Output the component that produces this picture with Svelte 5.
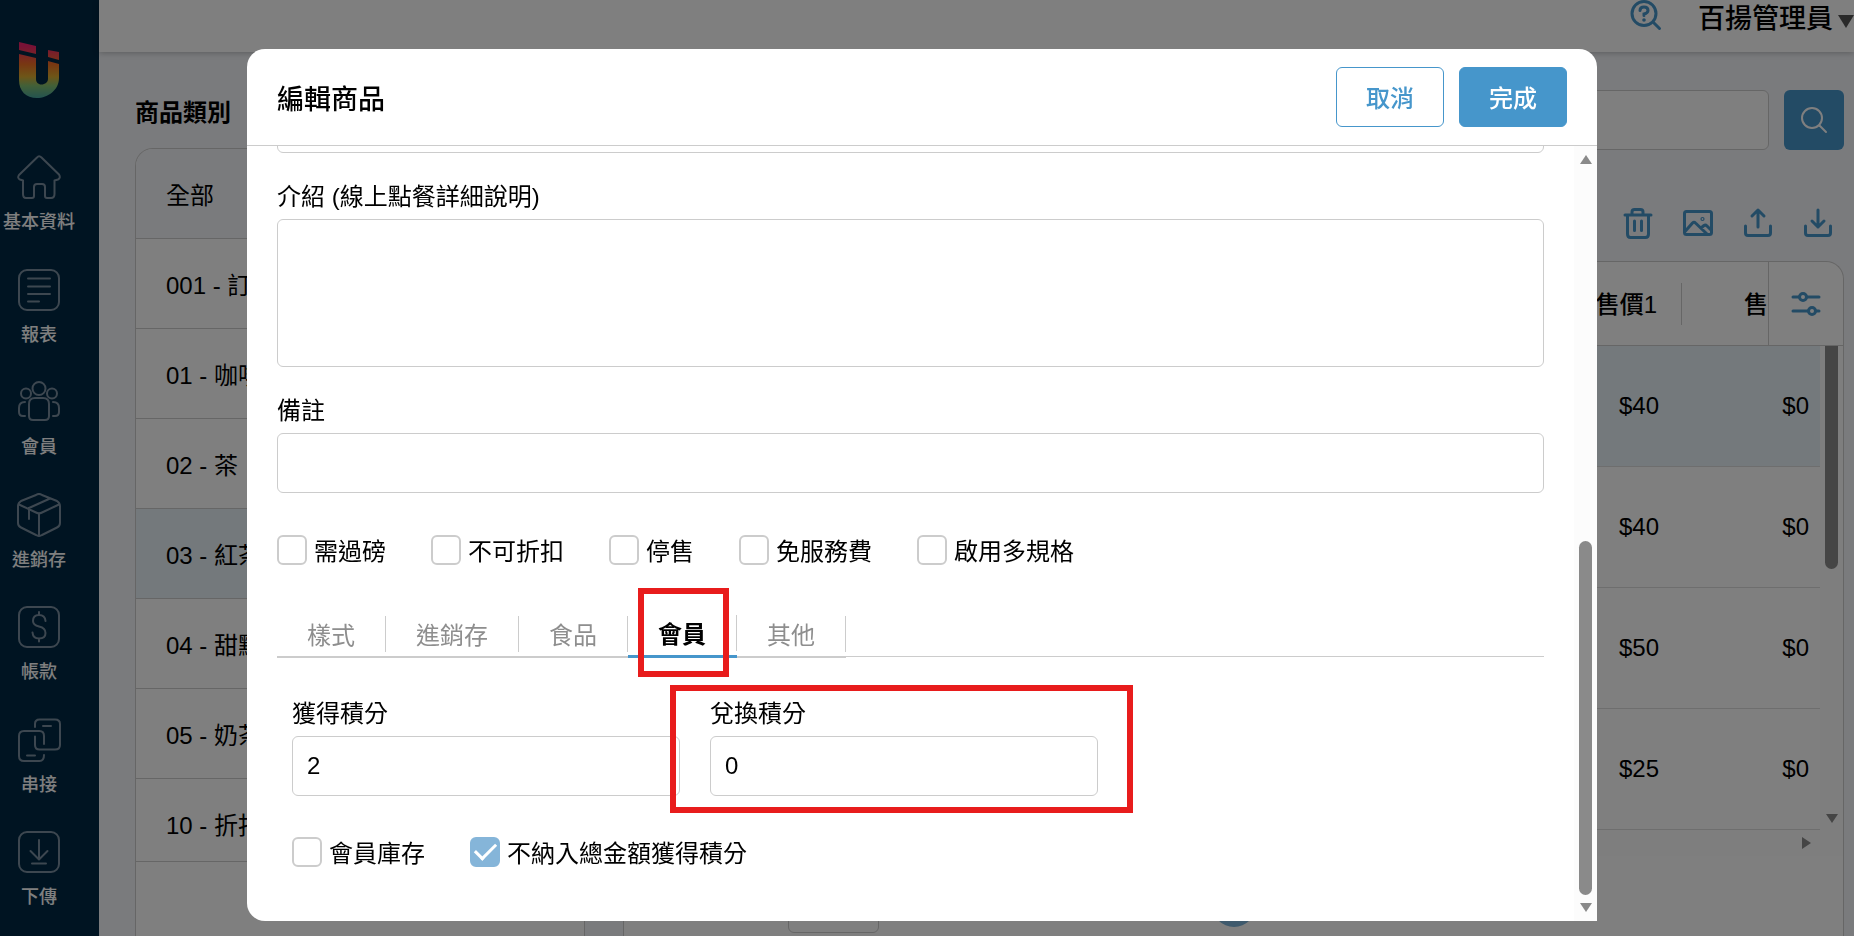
<script>
	const menus = [
		{ icon: 'home', label: '基本資料' },
		{ icon: 'report', label: '報表' },
		{ icon: 'member', label: '會員' },
		{ icon: 'stock', label: '進銷存' },
		{ icon: 'account', label: '帳款' },
		{ icon: 'link', label: '串接' },
		{ icon: 'download', label: '下傳' },
	];

	const categories = ['全部', '001 - 訂', '01 - 咖啡', '02 - 茶', '03 - 紅茶', '04 - 甜點', '05 - 奶茶', '10 - 折扣'];
	let category = $state('03 - 紅茶');

	const rows = [
		{ price1: 40, price2: 0 },
		{ price1: 40, price2: 0 },
		{ price1: 50, price2: 0 },
		{ price1: 25, price2: 0 },
	];
	let selected = $state(0);

	let flags = $state([
		{ label: '需過磅', checked: false },
		{ label: '不可折扣', checked: false },
		{ label: '停售', checked: false },
		{ label: '免服務費', checked: false },
		{ label: '啟用多規格', checked: false },
	]);

	const tabs = ['樣式', '進銷存', '食品', '會員', '其他'];
	let tab = $state('會員');

	let memberFlags = $state([
		{ label: '會員庫存', checked: false },
		{ label: '不納入總金額獲得積分', checked: true },
	]);

	let earn = $state('2');
	let redeem = $state('0');
</script>

<div class="app">
	<aside class="sidebar">
		<svg class="logo" viewBox="0 0 40 56" aria-hidden="true">
			<defs>
				<linearGradient id="rainbow" gradientUnits="userSpaceOnUse" x1="0" y1="0" x2="0" y2="56">
					<stop offset="0.08" stop-color="#f0246c" />
					<stop offset="0.4" stop-color="#f07024" />
					<stop offset="0.62" stop-color="#dcac30" />
					<stop offset="0.78" stop-color="#84c070" />
					<stop offset="1" stop-color="#48a8a0" />
				</linearGradient>
			</defs>
			<g fill="url(#rainbow)">
				<path d="M0 0 17 4V12L0 8Z" />
				<path d="M29 8 40 10V18L29 15Z" />
				<path d="M0 12 17 16V37C17 40 19 42.500 22.500 42.500S29 40 29 37V19L40 22V36C40 48 29 56 18 56C7 56 0 49 0 38Z" />
			</g>
		</svg>
		<nav>
			{#each menus as menu}
				<a href="#{menu.icon}" class="menu">
					<svg viewBox="0 0 44 44" aria-hidden="true">
						{#if menu.icon == 'home'}
							<path d="M20 2.500Q22 0 24.500 2.500L42 19.500Q44 23 41 24.500L37.500 25.500V39Q37.500 43 34 43H30Q28 43 28 41V32Q28 29 25 29H20Q17 29 17 32V41Q17 43 15 43H9Q6 43 6 39V25.500L3 24.500Q0 23 2 20Z" />
						{:else if menu.icon == 'report'}
							<rect x="2" y="2" width="40" height="40" rx="8" />
							<path d="M11 10.500H33M11 18.500H33M11 26H33M11 33.500H22" />
						{:else if menu.icon == 'member'}
							<circle cx="22" cy="8.500" r="6.500" />
							<circle cx="9" cy="13.500" r="5" />
							<circle cx="35" cy="13.500" r="5" />
							<path d="M12 24Q12 18 18 18H26Q32 18 32 24V36Q32 40 28 40H16Q12 40 12 36Z" />
							<path d="M8 22Q2 22 2 28V32Q2 36 6 36H8M36 22Q42 22 42 28V32Q42 36 38 36H36" />
						{:else if menu.icon == 'stock'}
							<path d="M19 2Q22 0 25 2L40 8Q43 10 43 13V30Q43 33 40 34.500L25 42Q22 44 19 42L4 34.500Q1 33 1 30V13Q1 10 4 8ZM2 11.500 19 19.500Q22 21 25 19.500L42 11.500M22 20.500V43M33 5.500 12 15V26" />
						{:else if menu.icon == 'account'}
							<rect x="2" y="2" width="40" height="40" rx="8" />
							<path d="M28.500 16Q28 10 22 10Q16 10 16 16Q16 20 22 21.500Q28.500 23 28.500 28Q28.500 33.500 22 33.500Q16 33.500 15.500 27.500M22 7V10M22 33.500V36.500" />
						{:else if menu.icon == 'link'}
							<path d="M18 9V6Q18 1.500 22.500 1.500H38Q43 1.500 43 6V27Q43 31.500 38 31.500H22.500Q18 31.500 18 27V18.500M26 8H34" />
							<path d="M27 26V18Q27 13 22.500 13H7Q2 13 2 18V38Q2 43 7 43H22.500Q27 43 27 37M10 37.500H18" />
						{:else}
							<rect x="2" y="2" width="40" height="40" rx="8" />
							<path d="M22 10V29M13.500 21 22 29.500 30.500 21M15 33.500H29" />
						{/if}
					</svg>
					<span>{menu.label}</span>
				</a>
			{/each}
		</nav>
	</aside>

	<div class="main">
		<header class="topbar">
			<button class="plain" aria-label="說明">
				<svg width="32" height="32" viewBox="0 0 32 32" aria-hidden="true">
					<g fill="none" stroke="#4796cb" stroke-width="3" stroke-linecap="round">
						<circle cx="14" cy="13.500" r="12" />
						<path d="M23.500 22.500 29.500 28.500" />
						<path d="M10 10.500Q10 7 14 7T18 10.500Q18 13 14 14V15.500" />
					</g>
					<circle cx="14" cy="20" r="1.800" fill="#4796cb" />
				</svg>
			</button>
			<button class="user">百揚管理員<i></i></button>
		</header>

		<div class="content">
			<section class="left">
				<h2>商品類別</h2>
				<div class="card list">
					<div class="items">
						{#each categories as name}
							<button class="category" class:all={name == '全部'} class:active={category == name} onclick={() => (category = name)}>
								{name}
							</button>
						{/each}
					</div>
				</div>
			</section>

			<section class="right">
				<div class="search">
					<input type="text" aria-label="搜尋商品">
					<button aria-label="搜尋">
						<svg width="28" height="28" viewBox="0 0 28 28" fill="none" stroke="#fff" stroke-width="2" stroke-linecap="round" aria-hidden="true">
							<circle cx="12" cy="12" r="10" />
							<path d="M19.500 19.500 26 26" />
						</svg>
					</button>
				</div>

				<div class="tools">
					<button class="plain" aria-label="刪除">
						<svg viewBox="0 0 32 32"><path d="M3 8H29M10 8V5Q10 2.500 12.500 2.500H18.500Q21 2.500 21 5V8M5.500 8V27Q5.500 30.500 8.500 30.500H23.500Q26.500 30.500 26.500 27V8M12.500 14V23.500M19.500 14V23.500" /></svg>
					</button>
					<button class="plain" aria-label="圖片">
						<svg viewBox="0 0 32 32"><rect x="2.500" y="4.500" width="27" height="23" rx="2" /><path d="M3 24.500 10.500 16Q12 14.500 13.500 16L25 27M19 21 22 18.500Q23.500 17.500 25 19L29 23" /><circle cx="20.500" cy="12" r="0.600" /></svg>
					</button>
					<button class="plain" aria-label="匯出">
						<svg viewBox="0 0 32 32"><path d="M16 20V3M10 9 16 3 22 9M3.500 19V26Q3.500 28.500 6 28.500H26Q28.500 28.500 28.500 26V19" /></svg>
					</button>
					<button class="plain" aria-label="匯入">
						<svg viewBox="0 0 32 32"><path d="M16 3V20M10 14 16 20 22 14M3.500 19V26Q3.500 28.500 6 28.500H26Q28.500 28.500 28.500 26V19" /></svg>
					</button>
				</div>

				<div class="card grid">
					<div class="table-box">
						<table>
							<colgroup>
								<col>
								<col class="c-price">
								<col class="c-next">
								<col class="c-rest">
								<col class="c-bar">
							</colgroup>
							<thead>
								<tr>
									<td></td>
									<th class="price"><span>售價1</span></th>
									<th class="next">售</th>
									<th class="setting" colspan="2">
										<button class="plain" aria-label="欄位設定">
											<svg viewBox="0 0 32 32"><path d="M3 8H9.500M16.500 8H29M3 22H18.500M25.500 22H29" /><circle cx="13" cy="8" r="3.500" /><circle cx="22" cy="22" r="3.500" /></svg>
										</button>
									</th>
								</tr>
							</thead>
							<tbody>
								{#each rows as row, i}
									<tr class:selected={selected == i} onclick={() => (selected = i)}>
										<td></td>
										<td class="price">${row.price1}</td>
										<td class="last" colspan="2">${row.price2}</td>
										<td class="bar"></td>
									</tr>
								{/each}
							</tbody>
						</table>
						<div class="vbar" aria-hidden="true"><b></b><i class="down"></i></div>
					</div>
					<div class="hbar" aria-hidden="true"><i></i></div>
					<footer class="pager">
						<div><select aria-label="每頁筆數"></select></div>
						<button aria-label="頁碼"></button>
					</footer>
				</div>
			</section>
		</div>
	</div>
</div>

<div class="mask"></div>

<div class="modal" role="dialog" aria-labelledby="modal-title">
	<header>
		<h1 id="modal-title">編輯商品</h1>
		<button class="btn">取消</button>
		<button class="btn primary">完成</button>
	</header>
	<div class="body">
		<div class="form">
			<input type="text" aria-label="說明">
			<div class="field">
				<label for="intro">介紹 (線上點餐詳細說明)</label>
				<textarea id="intro"></textarea>
			</div>
			<div class="field">
				<label for="memo">備註</label>
				<input id="memo" type="text">
			</div>

			<div class="checks">
				{#each flags as flag}
					<label class="check"><input type="checkbox" bind:checked={flag.checked}><span>{flag.label}</span></label>
				{/each}
			</div>

			<div class="tabs" role="tablist">
				{#each tabs as name}
					<button class="tab" class:active={tab == name} role="tab" aria-selected={tab == name} onclick={() => (tab = name)}>
						<span>{name}</span>
						{#if name == '會員'}<i class="mark"></i>{/if}
					</button>
				{/each}
			</div>

			<div class="panel">
				<div class="points">
					<div class="field">
						<label for="earn">獲得積分</label>
						<input id="earn" type="text" bind:value={earn}>
					</div>
					<div class="field">
						<label for="redeem">兌換積分</label>
						<input id="redeem" type="text" bind:value={redeem}>
						<i class="mark"></i>
					</div>
				</div>
				<div class="checks">
					{#each memberFlags as flag}
						<label class="check"><input type="checkbox" bind:checked={flag.checked}><span>{flag.label}</span></label>
					{/each}
				</div>
			</div>
		</div>
		<div class="scroll" aria-hidden="true">
			<i class="up"></i>
			<b></b>
			<i class="down"></i>
		</div>
	</div>
</div>

<style>
	:global(body) {
		overflow: hidden;
		color: #000;
		font: 24px/36px "Liberation Sans", "Noto Sans CJK TC", sans-serif;
	}

	:global(*) {
		box-sizing: border-box;
	}

	button, input, select, textarea {
		margin: 0;
		font: inherit;
		color: inherit;
	}

	button {
		padding: 0;
		border: none;
		background: none;
		cursor: pointer;
	}

	.app {
		display: flex;
		height: 100vh;
		overflow: hidden;
		background: #f4f6fa;
	}

	/* sidebar */
	.sidebar {
		flex: 0 0 99px;
		padding-top: 42px;
		background: #002844;
	}

	.logo {
		display: block;
		width: 40px;
		height: 56px;
		margin: 0 0 57px 19px;
	}

	nav {
		display: grid;
		grid-auto-rows: 1fr;
		width: 78px;
		height: 788px;
	}

	.menu {
		display: flex;
		flex-direction: column;
		align-items: center;
		gap: 9px;
		color: #fff;
		font-size: 18px;
		font-weight: 500;
		line-height: 28px;
		text-decoration: none;
	}

	.menu svg {
		width: 44px;
		height: 44px;
		fill: none;
		stroke: #7a8fa0;
		stroke-width: 2;
		stroke-linecap: round;
		stroke-linejoin: round;
	}

	/* page */
	.main {
		flex: 1;
		min-width: 0;
		display: flex;
		flex-direction: column;
	}

	.topbar {
		position: relative;
		display: flex;
		justify-content: flex-end;
		align-items: flex-start;
		gap: 36px;
		flex: 0 0 52px;
		background: #fff;
		box-shadow: 0 1px 6px rgba(0, 0, 0, 0.25);
	}

	.topbar svg {
		display: block;
	}

	.user {
		display: flex;
		align-items: center;
		gap: 5px;
		padding-top: 1px;
		font-size: 27px;
		font-weight: 500;
		white-space: nowrap;
	}

	.user i {
		border: 8px solid transparent;
		border-top: 13px solid #555;
		border-bottom: none;
		margin-top: 4px;
	}

	.content {
		flex: 1;
		display: flex;
		gap: 38px;
		min-height: 0;
		padding: 0 10px 0 36px;
	}

	.left {
		flex: 0 0 450px;
		display: flex;
		flex-direction: column;
	}

	h2 {
		height: 96px;
		margin: 0;
		padding-top: 25px;
		font-size: 24px;
		font-weight: 700;
		line-height: 72px;
	}

	.card {
		flex: 1;
		min-height: 0;
		border: 1px solid #ccc;
		border-bottom: none;
		border-radius: 18px 18px 0 0;
		background: #fff;
		overflow: hidden;
	}

	.items {
		height: 713px;
		overflow: hidden;
		border-bottom: 1px solid #ccc;
	}

	.category {
		display: block;
		width: 100%;
		height: 90px;
		padding: 4px 30px 0;
		border-bottom: 1px solid #ccc;
		text-align: left;
	}

	.category.all {
		background: #f4f6fa;
	}

	.category.active {
		background: #e8f2f8;
	}

	.right {
		flex: 1;
		min-width: 0;
		display: flex;
		flex-direction: column;
	}

	.search {
		display: flex;
		gap: 15px;
		margin-top: 38px;
	}

	.search input {
		flex: 1;
		height: 60px;
		border: 1px solid #ccc;
		border-radius: 6px;
		background: #fff;
	}

	.search button {
		display: grid;
		place-items: center;
		width: 60px;
		height: 60px;
		border-radius: 6px;
		background: #4696cb;
	}

	.plain svg {
		display: block;
	}

	.tools {
		display: flex;
		justify-content: flex-end;
		gap: 28px;
		margin: 57px 10px 22px 0;
	}

	.tools svg, .setting svg {
		width: 32px;
		height: 32px;
		fill: none;
		stroke: #4696cb;
		stroke-width: 3;
		stroke-linecap: round;
		stroke-linejoin: round;
	}

	.grid {
		display: flex;
		flex-direction: column;
	}

	.table-box {
		position: relative;
	}

	table {
		width: 100%;
		table-layout: fixed;
		border-collapse: separate;
		border-spacing: 0;
	}

	.c-price {
		width: 150px;
	}

	.c-next {
		width: 86px;
	}

	.c-rest {
		width: 52px;
	}

	.c-bar {
		width: 23px;
	}

	th, td {
		padding: 0;
		border-bottom: 1px solid #ccc;
		font-weight: 500;
		white-space: nowrap;
	}

	thead tr {
		height: 84px;
	}

	th.price {
		text-align: right;
	}

	th.price span {
		display: block;
		height: 42px;
		padding: 2px 24px 0 0;
		border-right: 1px solid #ccc;
		line-height: 40px;
	}

	th.next {
		padding-top: 2px;
		text-align: right;
	}

	.setting {
		border-left: 1px solid #ccc;
	}

	.setting button {
		display: inline-block;
		vertical-align: middle;
	}

	tbody tr {
		height: 121px;
	}

	tbody td {
		font-weight: 400;
		border-color: #ddd;
		text-align: right;
	}

	td.price {
		padding-right: 23px;
	}

	td.last {
		padding-right: 11px;
	}

	.selected td {
		background: #e8f2f8;
	}

	tbody td.bar {
		border: none;
		background: #fcfcfc;
	}

	.vbar {
		position: absolute;
		top: 84px;
		right: 5px;
		bottom: 7px;
		width: 13px;
		display: flex;
		flex-direction: column;
		justify-content: space-between;
		align-items: center;
	}

	.vbar b {
		width: 13px;
		height: 223px;
		border-radius: 0 0 7px 7px;
		background: #8a8a8a;
	}

	.down {
		border: 6px solid transparent;
		border-top: 9px solid #8a8a8a;
		border-bottom: none;
	}

	.up {
		border: 6px solid transparent;
		border-bottom: 9px solid #8a8a8a;
		border-top: none;
	}

	.hbar {
		display: flex;
		justify-content: flex-end;
		align-items: center;
		height: 26px;
		padding-right: 32px;
		background: #fcfcfc;
	}

	.hbar i {
		border: 6px solid transparent;
		border-left: 9px solid #8a8a8a;
		border-right: none;
	}

	.pager {
		display: grid;
		grid-template-columns: 1fr auto 1fr;
		align-items: center;
		margin-top: 21px;
	}

	.pager div {
		padding-left: 164px;
	}

	.pager select {
		display: block;
		width: 91px;
		height: 56px;
		border: 1px solid #ccc;
		border-radius: 6px;
		background: #fff;
		appearance: none;
	}

	.pager button {
		width: 44px;
		height: 44px;
		border-radius: 50%;
		background: #7eb5da;
	}

	/* dialog */
	.mask {
		position: fixed;
		inset: 0;
		background: rgba(0, 0, 0, 0.5);
	}

	.modal {
		position: fixed;
		inset: 49px 257px 15px 247px;
		display: flex;
		flex-direction: column;
		border-radius: 18px 18px 0 18px;
		background: #fff;
		overflow: hidden;
	}

	.modal header {
		display: flex;
		align-items: center;
		gap: 15px;
		flex: 0 0 97px;
		padding: 0 30px;
		border-bottom: 1px solid #ccc;
	}

	h1 {
		flex: 1;
		margin: 0;
		padding-top: 6px;
		font-size: 27px;
		font-weight: 500;
	}

	.btn {
		width: 108px;
		height: 60px;
		padding-top: 4px;
		border: 1px solid #4696cb;
		border-radius: 6px;
		color: #4696cb;
		font-weight: 500;
	}

	.btn.primary {
		background: #4696cb;
		color: #fff;
	}

	.body {
		flex: 1;
		min-height: 0;
		display: flex;
	}

	/* scrolled to the end, so the top of the form runs out of view */
	.form {
		flex: 1;
		min-width: 0;
		display: flex;
		flex-direction: column;
		justify-content: flex-end;
		padding: 0 30px 54px;
		overflow: hidden;
	}

	.form input[type="text"], textarea {
		display: block;
		flex-shrink: 0;
		width: 100%;
		height: 60px;
		padding: 0 14px;
		border: 1px solid #ccc;
		border-radius: 6px;
		background: #fff;
		outline: none;
	}

	.form textarea {
		height: 148px;
		resize: none;
	}

	.field {
		position: relative;
		margin-top: 24px;
	}

	.field label {
		display: block;
		padding-top: 2px;
		margin-bottom: 4px;
	}

	.checks {
		display: flex;
		gap: 45px;
		margin-top: 42px;
	}

	.check {
		display: flex;
		align-items: center;
		gap: 7px;
		height: 30px;
		white-space: nowrap;
	}

	.check span {
		padding-top: 4px;
	}

	.check input {
		appearance: none;
		display: grid;
		place-items: center;
		width: 30px;
		height: 30px;
		border: 2px solid #ccc;
		border-radius: 6px;
		background: #fff;
	}

	.check input:checked {
		border-color: #85b5d9;
		background: #85b5d9;
	}

	.check input:checked::before {
		content: '';
		width: 18px;
		height: 9px;
		margin-bottom: 6px;
		border: solid #fff;
		border-width: 0 0 3px 3px;
		transform: rotate(-45deg);
	}

	.tabs {
		display: flex;
		height: 43px;
		margin-top: 50px;
		background: linear-gradient(#ccc, #ccc) 0 41px / 100% 1px no-repeat;
	}

	.tab {
		position: relative;
		padding-bottom: 4px;
		border-bottom: 2px solid #ccc;
		color: #8e8e8e;
	}

	.tab span {
		display: block;
		height: 36px;
		padding: 2px 30px 0;
		border-right: 1px solid #ccc;
	}

	.tab.active {
		padding-bottom: 4px;
		border-bottom: 3px solid #4696cb;
		color: #000;
		font-weight: 700;
	}

	.mark {
		position: absolute;
		z-index: 1;
		border: 6px solid #e81c1c;
		pointer-events: none;
	}

	.tab .mark {
		inset: -27px 8px -22px 10px;
	}

	.field .mark {
		inset: -9px -35px -17px -40px;
	}

	.panel {
		padding: 12px 15px 0;
	}

	.panel .checks {
		margin-top: 41px;
	}

	.points {
		display: grid;
		grid-template-columns: repeat(2, minmax(0, 388px));
		gap: 30px;
	}

	.scroll {
		flex: 0 0 23px;
		display: flex;
		flex-direction: column;
		align-items: center;
		padding: 9px 0;
		background: #fcfcfc;
	}

	.scroll b {
		width: 13px;
		height: 354px;
		margin: auto 0 8px;
		border-radius: 7px;
		background: #8a8a8a;
	}
</style>
